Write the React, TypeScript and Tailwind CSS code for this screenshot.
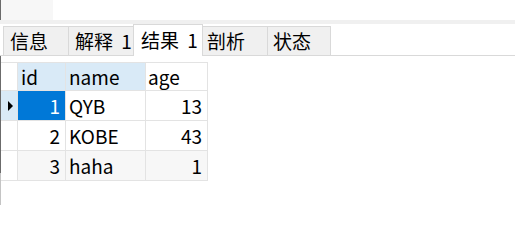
import React from "react"

const tabs = [
  { label: "信息", cls: "w-[65px] border-l pl-[6px]" },
  { label: "解释 1", cls: "w-[65px] border-l pl-[6px]" },
  { label: "结果 1", active: true, cls: "w-[70px] border-l border-r pl-[7px]" },
  { label: "剖析", cls: "w-[64px] pl-[4px]" },
  { label: "状态", cls: "w-[64px] border-l border-r pl-[5px]" },
]

const rows = [
  { id: 1, name: "QYB", age: 13 },
  { id: 2, name: "KOBE", age: 43 },
  { id: 3, name: "haha", age: 1 },
]

export default function App() {
  return (
    <div className="w-[515px] h-[205px] bg-white overflow-hidden flex flex-col text-[19px] leading-none text-black font-['Noto_Sans_CJK_SC','Noto_Sans',sans-serif]">
      {/* top strip */}
      <div className="h-[20px] flex shrink-0">
        <div className="w-[53px] bg-[#f7f7f7] border-l border-[#6b6b6b]" />
      </div>
      <div className="h-[4px] bg-[#f0f0f0] shrink-0" />

      {/* tabs */}
      <div className="h-[32px] shrink-0 flex items-end pl-[3px] border-b border-[#d9d9d9] [word-spacing:4px]">
        {tabs.map((t) =>
          t.active ? (
            <div key={t.label} className={`h-[32px] -mb-px bg-white border-t border-[#d9d9d9] flex items-center pb-[3px] ${t.cls}`}>
              {t.label}
            </div>
          ) : (
            <div key={t.label} className={`h-[29px] bg-[#f0f0f0] border-t border-[#d9d9d9] flex items-center pb-px ${t.cls}`}>
              {t.label}
            </div>
          )
        )}
      </div>

      {/* grid area */}
      <div className="flex-1 flex">
        <div className="w-px flex flex-col">
          <div className="h-[117px] bg-[#6b6b6b]" />
          <div className="flex-1 bg-[#c4c4c4]" />
        </div>
        <div className="pt-[6px]">
          <div className="flex h-[29px] border-y border-[#e3e3e3]">
            <div className="w-[17px] border-r border-[#e3e3e3] bg-white" />
            <div className="w-[48px] border-r border-[#e3e3e3] bg-[#d9eaf7] flex items-center pl-[3px]">id</div>
            <div className="w-[80px] border-r border-[#e3e3e3] bg-[#d9eaf7] flex items-center pl-[3px]">name</div>
            <div className="w-[62px] border-r border-[#e3e3e3] bg-white flex items-center pl-[2px]">age</div>
          </div>
          {rows.map((r, i) => {
            const sel = i === 0
            const alt = i === 2 ? "bg-[#f7f7f7]" : "bg-white"
            return (
              <div key={r.id} className="flex h-[30px] border-b border-[#e3e3e3]">
                <div className={`w-[17px] border-r border-[#e3e3e3] flex items-center pl-[7px] ${sel ? "bg-[#d9eaf7]" : "bg-white"}`}>
                  {sel && (
                    <svg width="5" height="10" viewBox="0 0 5 10">
                      <path d="M0 0 L5 5 L0 10 Z" fill="#000" />
                    </svg>
                  )}
                </div>
                <div className={`w-[48px] border-r border-[#e3e3e3] flex items-center justify-end pr-[5px] ${sel ? "bg-[#0078d7] text-white" : alt}`}>
                  {r.id}
                </div>
                <div className={`w-[80px] border-r border-[#e3e3e3] flex items-center pl-[3px] ${alt}`}>{r.name}</div>
                <div className={`w-[62px] border-r border-[#e3e3e3] flex items-center justify-end pr-[5px] ${alt}`}>{r.age}</div>
              </div>
            )
          })}
        </div>
      </div>
    </div>
  )
}
